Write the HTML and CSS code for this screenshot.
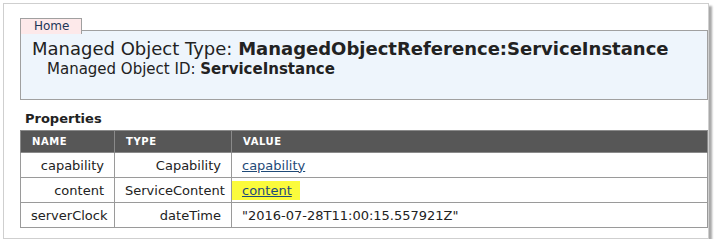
FILE: index.html
```html
<!DOCTYPE html>
<html lang="en">
<head>
  <meta charset="UTF-8">
  <title>Managed Object Browser</title>
  <link rel="stylesheet" href="styles.css">
</head>
<body>
  <div class="frame">
    <div class="nav">
      <a href="#" class="tab">Home</a>
    </div>

    <div class="header">
      <div class="mo-type">Managed Object Type: <b>ManagedObjectReference:ServiceInstance</b></div>
      <div class="mo-id">Managed Object ID: <b>ServiceInstance</b></div>
    </div>

    <h3 class="section">Properties</h3>
    <table class="props">
      <colgroup>
        <col class="col-name">
        <col class="col-type">
        <col>
      </colgroup>
      <thead>
        <tr>
          <th>Name</th>
          <th>Type</th>
          <th>Value</th>
        </tr>
      </thead>
      <tbody>
        <tr>
          <td class="name">capability</td>
          <td class="type">Capability</td>
          <td><a href="#">capability</a></td>
        </tr>
        <tr>
          <td class="name">content</td>
          <td class="type">ServiceContent</td>
          <td><span class="marker"><a href="#">content</a></span></td>
        </tr>
        <tr>
          <td class="name">serverClock</td>
          <td class="type">dateTime</td>
          <td>"2016-07-28T11:00:15.557921Z"</td>
        </tr>
      </tbody>
    </table>
  </div>
</body>
</html>
```

FILE: styles.css
```css
body {
  margin: 0;
  background: #fff;
  font-family: "DejaVu Sans", Verdana, sans-serif;
  color: #222;
}

/* screenshot frame with shadow */
.frame {
  box-sizing: border-box;
  width: 706px;
  height: 236px;
  margin: 3px 0 0 3px;
  padding: 11px 0 0 16px;
  border: 1px solid #cfcfcf;
  box-shadow: 3px 3px 2px #a8a8a8;
  overflow: hidden;
}

.nav {
  height: 15px;
}
.tab {
  display: inline-block;
  box-sizing: border-box;
  width: 62px;
  height: 16px;
  padding-left: 13px;
  background: #fde9ea;
  border: 1px solid #a0a0a0;
  border-bottom: none;
  color: #1d3557;
  font-size: 12px;
  line-height: 15px;
  text-decoration: none;
}

.header {
  height: 70px;
  box-sizing: border-box;
  background: #eef5fc;
  border: 1px solid #a0a0a0;
  padding: 7px 0 0 11px;
}
.mo-type {
  font-size: 18px;
  line-height: 22px;
}
.mo-id {
  font-size: 15px;
  line-height: 18px;
  padding-left: 15px;
}

.section {
  margin: 10px 0 2px 5px;
  font-size: 13px;
  line-height: 18px;
}

.props {
  border-collapse: collapse;
  table-layout: fixed;
  width: 100%;
  font-size: 13px;
}
.props .col-name {
  width: 94px;
}
.props .col-type {
  width: 117px;
}
.props th {
  height: 21px;
  padding: 0 11px;
  background: #575757;
  color: #fff;
  font-size: 10px;
  font-weight: bold;
  letter-spacing: 0.6px;
  text-transform: uppercase;
  text-align: left;
  border: 1px solid #8a8a8a;
}
.props td {
  height: 24px;
  padding: 0 10px;
  border: 1px solid #9a9a9a;
  white-space: nowrap;
}
.props td.name,
.props td.type {
  text-align: right;
}
.props a {
  color: #1f4a78;
}

/* yellow highlighter mark */
.marker {
  background: #fbfb3c;
  margin-left: -10px;
  padding: 2px 8px 2px 10px;
}
```
